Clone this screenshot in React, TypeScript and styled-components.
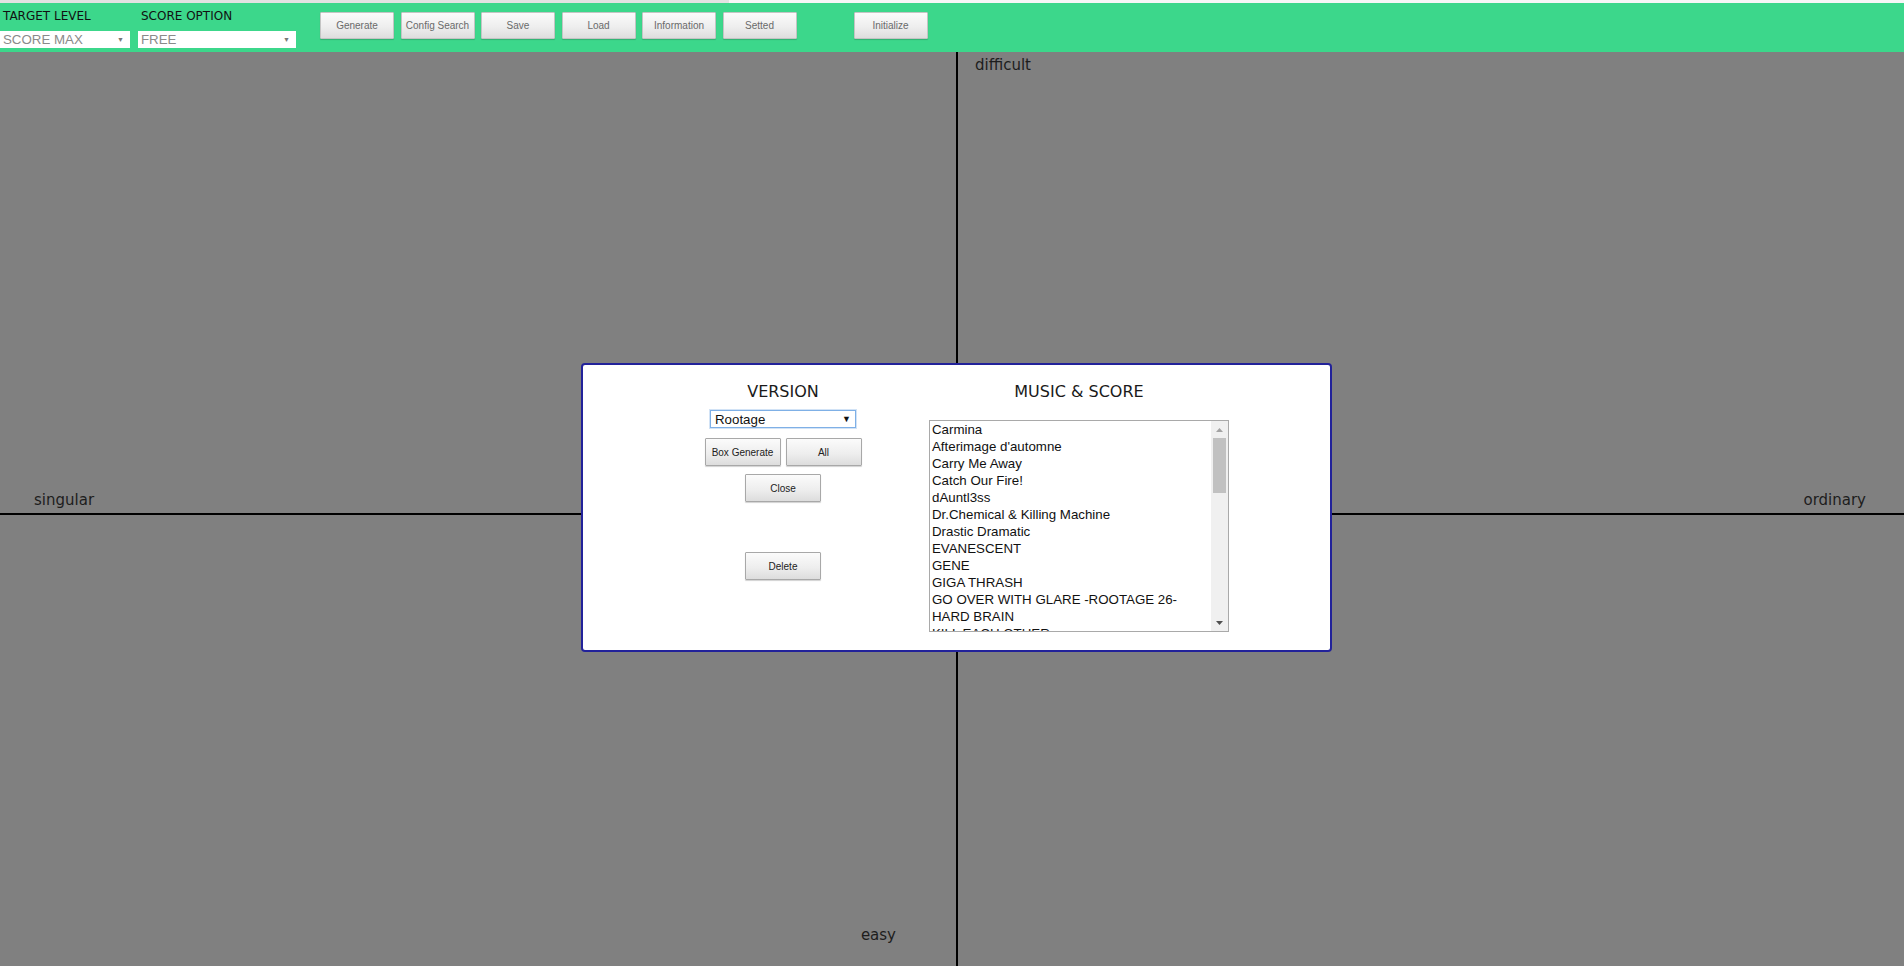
import React from 'react';
import styled, { createGlobalStyle } from 'styled-components';

const GlobalStyle = createGlobalStyle`
  html, body {
    margin: 0;
    padding: 0;
    background: #808080;
    overflow: hidden;
  }
  * {
    box-sizing: border-box;
  }
`;

const Page = styled.div`
  position: relative;
  width: 1904px;
  height: 966px;
  display: flex;
  flex-direction: column;
  font-family: "DejaVu Sans", Verdana, sans-serif;
  color: #1c1c1c;
`;

const TopStrip = styled.div`
  height: 3px;
  background: linear-gradient(to right, #e2e2e2 0, #e2e2e2 729px, #f6f6f6 729px);
`;

const Header = styled.div`
  height: 49px;
  background: #3cd78b;
  display: flex;
  align-items: flex-start;
`;

const Field = styled.div<{ width: number; left: number }>`
  width: ${({ width }) => width}px;
  margin-left: ${({ left }) => left}px;
  display: flex;
  flex-direction: column;
`;

const FieldLabel = styled.div`
  font-size: 12px;
  line-height: 14px;
  padding: 6px 0 0 3px;
  color: #111;
  height: 28px;
`;

const FieldSelect = styled.div`
  height: 17px;
  background: #fff;
  display: flex;
  align-items: center;
  justify-content: space-between;
  padding: 0 6px 0 3px;
  font-family: "Liberation Sans", Arial, sans-serif;
  font-size: 13.3px;
  color: #8a8a8a;
`;

const SmallArrow = styled.span<{ dark?: boolean }>`
  font-size: ${({ dark }) => (dark ? '9px' : '7px')};
  color: ${({ dark }) => (dark ? '#111' : '#777')};
  line-height: 1;
`;

const ButtonBar = styled.div`
  display: flex;
  gap: 6.5px;
  margin-left: 24px;
  margin-top: 9px;
`;

const Spacer = styled.div<{ w: number }>`
  width: ${({ w }) => w}px;
`;

const Button = styled.button<{ w: number; h: number; muted?: boolean }>`
  width: ${({ w }) => w}px;
  height: ${({ h }) => h}px;
  padding: 0;
  display: flex;
  align-items: center;
  justify-content: center;
  background: linear-gradient(to bottom, #fbfbfb 0%, #eeeeee 55%, #dddddd 100%);
  border: 1px solid ${({ muted }) => (muted ? '#c4c4c4' : '#a8a8a8')};
  border-radius: 1px;
  box-shadow: 0 1px 1px rgba(0, 0, 0, 0.18);
  font-family: "Liberation Sans", Arial, sans-serif;
  font-size: 10px;
  color: ${({ muted }) => (muted ? '#6a6a6a' : '#222')};
  white-space: nowrap;
  cursor: pointer;
`;

const Canvas = styled.div`
  flex: 1;
  display: grid;
  grid-template-columns: 958px 1fr;
  grid-template-rows: 463px 1fr;
  background: #808080;
`;

const Quadrant = styled.div<{ right?: boolean; bottom?: boolean }>`
  display: flex;
  flex-direction: column;
  border-right: ${({ right }) => (right ? '2px solid #000' : 'none')};
  border-bottom: ${({ bottom }) => (bottom ? '2px solid #000' : 'none')};
`;

const AxisLabel = styled.div<{ align: 'start' | 'end' }>`
  font-size: 15px;
  line-height: 18px;
  color: #1d1d1d;
  align-self: ${({ align }) => (align === 'start' ? 'flex-start' : 'flex-end')};
`;

const TopRow = styled.div`
  padding: 4px 0 0 17px;
  display: flex;
  flex: 1;
`;

const BottomRow = styled.div<{ pl?: number; pr?: number; pb: number }>`
  display: flex;
  justify-content: ${({ pl }) => (pl !== undefined ? 'flex-start' : 'flex-end')};
  padding-left: ${({ pl }) => pl ?? 0}px;
  padding-right: ${({ pr }) => pr ?? 0}px;
  padding-bottom: ${({ pb }) => pb}px;
`;

const Filler = styled.div`
  flex: 1;
`;

/* modal */
const Dialog = styled.div`
  position: absolute;
  left: 581px;
  top: 363px;
  width: 751px;
  height: 289px;
  background: #fff;
  border: 2px solid #22229a;
  border-radius: 4px;
  display: flex;
  padding: 17px 0 0 54px;
`;

const Column = styled.div<{ w: number }>`
  width: ${({ w }) => w}px;
  display: flex;
  flex-direction: column;
  align-items: center;
`;

const Heading = styled.div`
  font-size: 16px;
  line-height: 20px;
  color: #1a1a1a;
`;

const VersionSelect = styled.div`
  margin-top: 8px;
  width: 146px;
  height: 18px;
  border: 1px solid #7fb0e6;
  box-shadow: 0 0 0 1px rgba(127, 176, 230, 0.35);
  display: flex;
  align-items: center;
  justify-content: space-between;
  padding: 0 4px 0 4px;
  font-family: "Liberation Sans", Arial, sans-serif;
  font-size: 13.3px;
  color: #111;
`;

const ButtonRow = styled.div<{ mt: number }>`
  display: flex;
  gap: 5px;
  margin-top: ${({ mt }) => mt}px;
`;

const ListBox = styled.div`
  margin-top: 18px;
  width: 300px;
  height: 212px;
  border: 1px solid #a9a9a9;
  display: flex;
  background: #fff;
`;

const Items = styled.div`
  flex: 1;
  overflow: hidden;
  padding-left: 2px;
`;

const Item = styled.div`
  height: 17px;
  line-height: 17px;
  font-family: "Liberation Sans", Arial, sans-serif;
  font-size: 13.3px;
  color: #111;
  white-space: nowrap;
`;

const ScrollBar = styled.div`
  width: 17px;
  background: #f0f0f0;
  display: flex;
  flex-direction: column;
`;

const ScrollButton = styled.div<{ disabled?: boolean }>`
  height: 17px;
  display: flex;
  align-items: center;
  justify-content: center;
  color: ${({ disabled }) => (disabled ? '#a3a3a3' : '#505050')};
`;

const Track = styled.div`
  flex: 1;
  display: flex;
  flex-direction: column;
  align-items: center;
`;

const Thumb = styled.div`
  width: 13px;
  height: 55px;
  background: #c1c1c1;
`;

const songs = [
  'Carmina',
  "Afterimage d'automne",
  'Carry Me Away',
  'Catch Our Fire!',
  'dAuntl3ss',
  'Dr.Chemical & Killing Machine',
  'Drastic Dramatic',
  'EVANESCENT',
  'GENE',
  'GIGA THRASH',
  'GO OVER WITH GLARE -ROOTAGE 26-',
  'HARD BRAIN',
  'KILL EACH OTHER',
  'Mare Nectaris',
  'NEMESIS',
];

const topButtons = ['Generate', 'Config Search', 'Save', 'Load', 'Information', 'Setted'];

const Triangle: React.FC<{ up?: boolean }> = ({ up }) => (
  <svg width="7" height="4" viewBox="0 0 7 4">
    <polygon points={up ? '0,4 7,4 3.5,0' : '0,0 7,0 3.5,4'} fill="currentColor" />
  </svg>
);

const App: React.FC = () => {
  return (
    <Page>
      <GlobalStyle />
      <TopStrip />
      <Header>
        <Field width={130} left={0}>
          <FieldLabel>TARGET LEVEL</FieldLabel>
          <FieldSelect>
            <span>SCORE MAX</span>
            <SmallArrow>▼</SmallArrow>
          </FieldSelect>
        </Field>
        <Field width={158} left={8}>
          <FieldLabel>SCORE OPTION</FieldLabel>
          <FieldSelect>
            <span>FREE</span>
            <SmallArrow>▼</SmallArrow>
          </FieldSelect>
        </Field>
        <ButtonBar>
          {topButtons.map((b) => (
            <Button key={b} w={74} h={27} muted>
              {b}
            </Button>
          ))}
          <Spacer w={44} />
          <Button w={74} h={27} muted>
            Initialize
          </Button>
        </ButtonBar>
      </Header>

      <Canvas>
        <Quadrant right bottom>
          <Filler />
          <BottomRow pl={34} pb={4}>
            <AxisLabel align="start">singular</AxisLabel>
          </BottomRow>
        </Quadrant>
        <Quadrant bottom>
          <TopRow>
            <AxisLabel align="start">difficult</AxisLabel>
          </TopRow>
          <BottomRow pr={38} pb={4}>
            <AxisLabel align="end">ordinary</AxisLabel>
          </BottomRow>
        </Quadrant>
        <Quadrant right>
          <Filler />
          <BottomRow pr={60} pb={22}>
            <AxisLabel align="end">easy</AxisLabel>
          </BottomRow>
        </Quadrant>
        <Quadrant />
      </Canvas>

      <Dialog>
        <Column w={292}>
          <Heading>VERSION</Heading>
          <VersionSelect>
            <span>Rootage</span>
            <SmallArrow dark>▼</SmallArrow>
          </VersionSelect>
          <ButtonRow mt={10}>
            <Button w={76} h={28}>Box Generate</Button>
            <Button w={76} h={28}>All</Button>
          </ButtonRow>
          <ButtonRow mt={8}>
            <Button w={76} h={28}>Close</Button>
          </ButtonRow>
          <ButtonRow mt={50}>
            <Button w={76} h={28}>Delete</Button>
          </ButtonRow>
        </Column>
        <Column w={300}>
          <Heading>MUSIC &amp; SCORE</Heading>
          <ListBox>
            <Items>
              {songs.map((s) => (
                <Item key={s}>{s}</Item>
              ))}
            </Items>
            <ScrollBar>
              <ScrollButton disabled>
                <Triangle up />
              </ScrollButton>
              <Track>
                <Thumb />
              </Track>
              <ScrollButton>
                <Triangle />
              </ScrollButton>
            </ScrollBar>
          </ListBox>
        </Column>
      </Dialog>
    </Page>
  );
};

export default App;
